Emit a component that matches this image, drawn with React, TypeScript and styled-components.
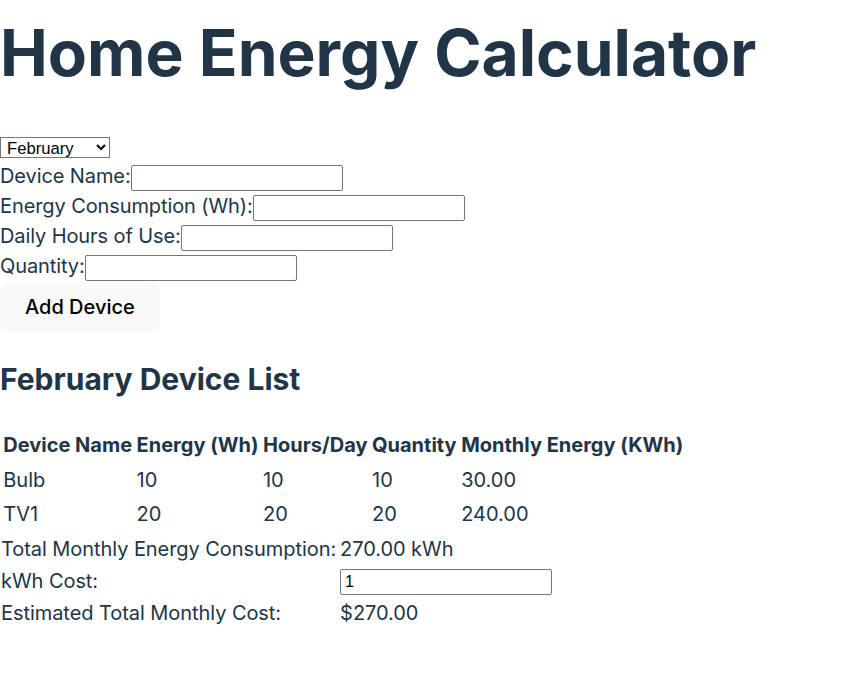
import React from "react";
import styled, { createGlobalStyle } from "styled-components";

const GlobalStyle = createGlobalStyle`
  html, body {
    margin: 0;
    padding: 0;
    background: #ffffff;
  }
  body {
    font-family: Inter, "Noto Sans", sans-serif;
    font-size: 20px;
    line-height: 1.5;
    font-weight: 400;
    color: #213547;
    -webkit-font-smoothing: antialiased;
  }
`;

const Page = styled.div`
  display: flex;
  flex-direction: column;
  align-items: flex-start;
  width: 860px;
  min-height: 696px;
`;

const Title = styled.h1`
  margin: 18px 0 0;
  height: 113px;
  font-size: 64px;
  line-height: 1.1;
  font-weight: 700;
  color: #213547;
`;

const FormBlock = styled.div`
  display: flex;
  flex-direction: column;
  align-items: flex-start;
`;

const SelectRow = styled.div`
  display: flex;
  align-items: flex-end;
  height: 30px;
  box-sizing: border-box;
  padding-bottom: 3px;
`;

const Row = styled.div`
  display: flex;
  align-items: baseline;
  height: 30px;
`;

const MonthSelect = styled.select`
  width: 110px;
  height: 21px;
  box-sizing: border-box;
  font-family: "Liberation Sans", Arial, sans-serif;
  font-size: 16.67px;
  color: #000;
  background: #fff;
  border: 1px solid #767676;
  border-radius: 0;
  padding: 0 2px;
`;

const Label = styled.label`
  white-space: nowrap;
  letter-spacing: -0.1px;
`;

const TextInput = styled.input`
  width: 212px;
  height: 26px;
  box-sizing: border-box;
  border: 1px solid #767676;
  border-radius: 2px;
  padding: 1px 4px;
  font-family: "Liberation Sans", Arial, sans-serif;
  font-size: 16px;
  color: #000;
  background: #fff;
`;

const AddButton = styled.button`
  border-radius: 10px;
  border: 1px solid transparent;
  padding: 12px 24px;
  margin-top: 1px;
  font-size: 20px;
  font-weight: 500;
  font-family: inherit;
  line-height: normal;
  background-color: #f9f9f9;
  color: #000;
  cursor: pointer;
`;

const SubTitle = styled.h2`
  margin: 25px 0;
  font-size: 30px;
  line-height: 1.5;
  font-weight: 700;
  color: #213547;
`;

const DeviceTable = styled.table`
  border-collapse: separate;
  border-spacing: 2.5px;
  font-size: 20px;
  line-height: 1.5;
`;

const Th = styled.th`
  padding: 1.25px;
  text-align: left;
  font-weight: 700;
  white-space: nowrap;
`;

const Td = styled.td`
  padding: 1.25px;
  text-align: left;
  white-space: nowrap;
`;

const Summary = styled.div`
  display: grid;
  grid-template-columns: max-content max-content;
  grid-auto-rows: 32px;
  column-gap: 4px;
  padding-left: 1px;
  margin-top: 1px;
  align-items: start;
`;

const SummaryCell = styled.div`
  height: 30px;
  white-space: nowrap;
  letter-spacing: -0.06px;
`;

const CostInput = styled(TextInput)`
  align-self: center;
`;

const months = [
  "January",
  "February",
  "March",
  "April",
  "May",
  "June",
  "July",
  "August",
  "September",
  "October",
  "November",
  "December",
];

const devices = [
  { name: "Bulb", energy: 10, hours: 10, qty: 10, monthly: "30.00" },
  { name: "TV1", energy: 20, hours: 20, qty: 20, monthly: "240.00" },
];

export default function App() {
  return (
    <>
      <GlobalStyle />
      <Page>
        <Title>Home Energy Calculator</Title>
        <FormBlock>
          <SelectRow>
            <MonthSelect defaultValue="February">
              {months.map((m) => (
                <option key={m} value={m}>
                  {m}
                </option>
              ))}
            </MonthSelect>
          </SelectRow>
          <Row>
            <Label>Device Name:</Label>
            <TextInput type="text" />
          </Row>
          <Row>
            <Label>Energy Consumption (Wh):</Label>
            <TextInput type="number" />
          </Row>
          <Row>
            <Label>Daily Hours of Use:</Label>
            <TextInput type="number" />
          </Row>
          <Row>
            <Label>Quantity:</Label>
            <TextInput type="number" />
          </Row>
          <AddButton>Add Device</AddButton>
        </FormBlock>
        <SubTitle>February Device List</SubTitle>
        <DeviceTable>
          <thead>
            <tr>
              <Th>Device Name</Th>
              <Th>Energy (Wh)</Th>
              <Th>Hours/Day</Th>
              <Th>Quantity</Th>
              <Th>Monthly Energy (KWh)</Th>
            </tr>
          </thead>
          <tbody>
            {devices.map((d) => (
              <tr key={d.name}>
                <Td>{d.name}</Td>
                <Td>{d.energy}</Td>
                <Td>{d.hours}</Td>
                <Td>{d.qty}</Td>
                <Td>{d.monthly}</Td>
              </tr>
            ))}
          </tbody>
        </DeviceTable>
        <Summary>
          <SummaryCell>Total Monthly Energy Consumption:</SummaryCell>
          <SummaryCell>270.00 kWh</SummaryCell>
          <SummaryCell>kWh Cost:</SummaryCell>
          <CostInput type="number" defaultValue="1" />
          <SummaryCell>Estimated Total Monthly Cost:</SummaryCell>
          <SummaryCell>$270.00</SummaryCell>
        </Summary>
      </Page>
    </>
  );
}
